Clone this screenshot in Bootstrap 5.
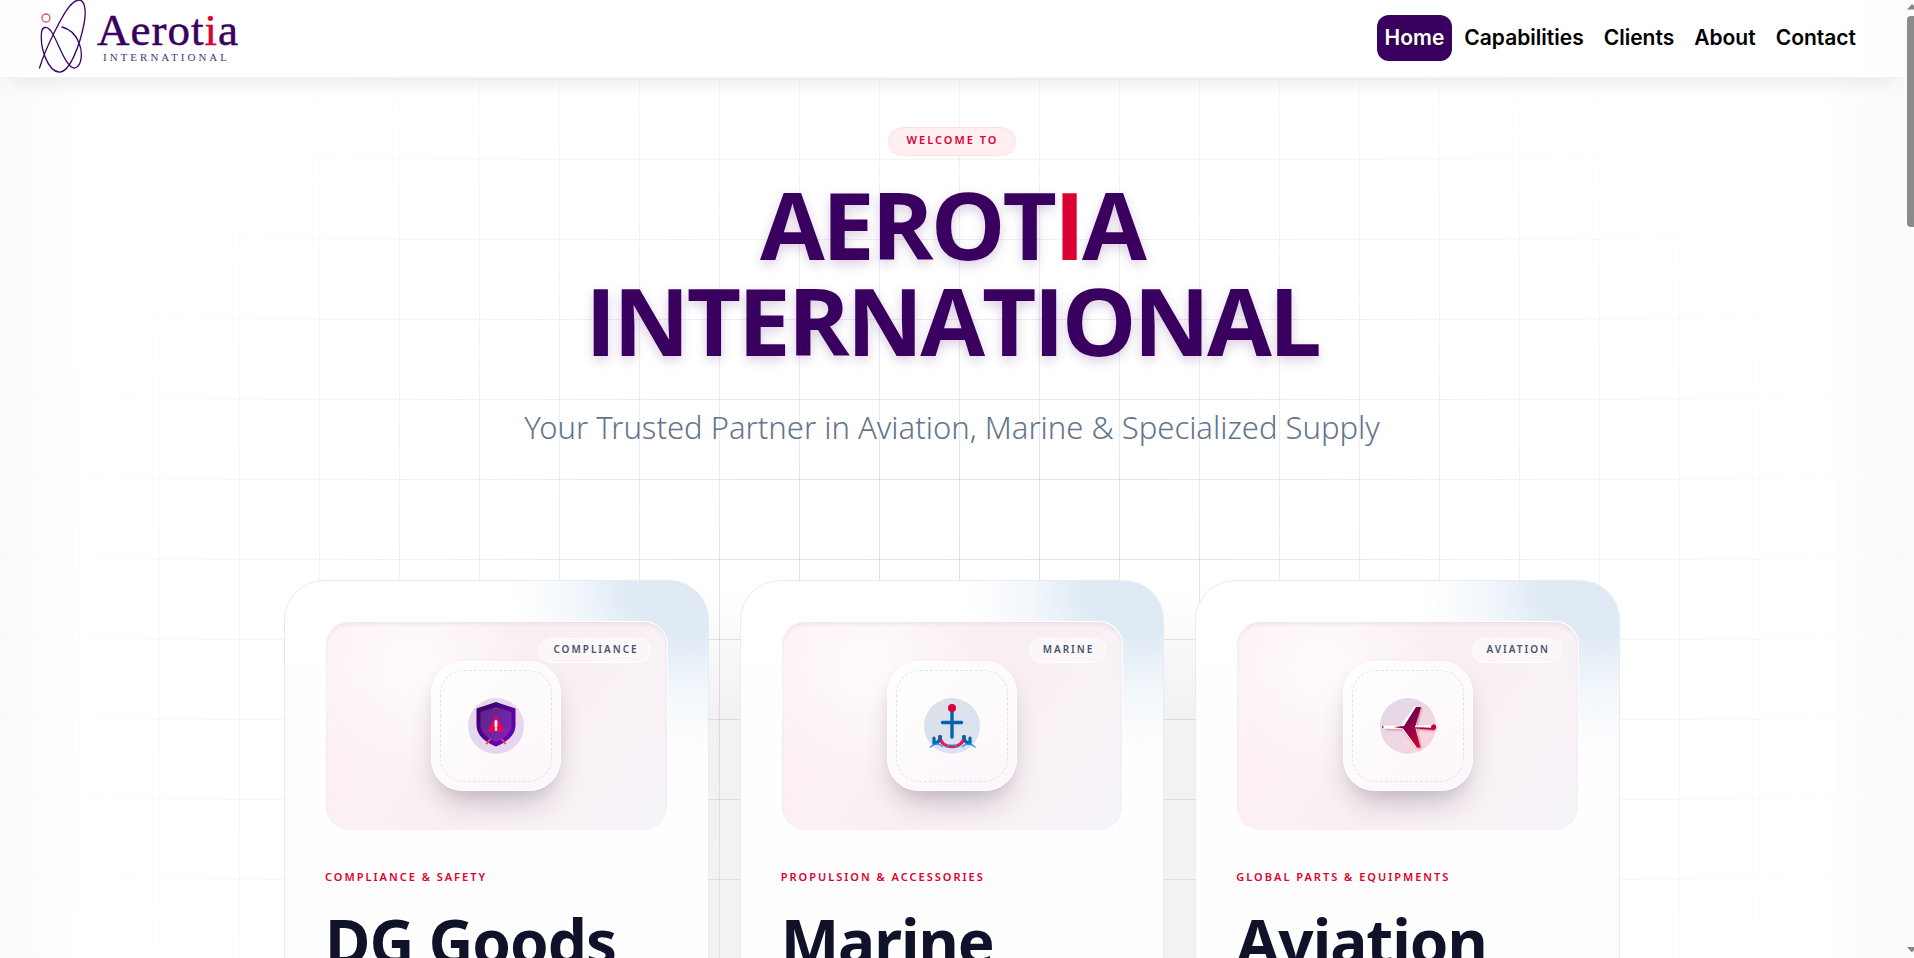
<!DOCTYPE html>
<html lang="en">
<head>
<meta charset="utf-8">
<meta name="viewport" content="width=device-width, initial-scale=1">
<title>Aerotia International</title>
<link href="https://cdn.jsdelivr.net/npm/bootstrap@5.3.0/dist/css/bootstrap.min.css" rel="stylesheet">
<style>
:root { --brand: #3a0060; --accent: #dc0032; --slate: #64748b; }
body { font-family: "Noto Sans", "Open Sans", sans-serif; background: #fff; }
.page-area { background: linear-gradient(90deg, #fafafd 0, #fdfdfe 50px, #fff 80px, #fff calc(100% - 80px), #fdfdfe calc(100% - 50px), #fafafd 100%); isolation: isolate; }
.grid-lines { position: absolute; inset: 0; z-index: -1;
  background-image: linear-gradient(90deg, transparent 79px, rgba(58,0,96,.13) 79px), linear-gradient(transparent 79px, rgba(58,0,96,.13) 79px);
  background-size: 80px 80px;
  -webkit-mask-image: radial-gradient(ellipse 980px 760px at 50% 640px, #000 10%, transparent 100%);
  mask-image: radial-gradient(ellipse 980px 760px at 50% 640px, #000 10%, transparent 100%); }
.top-nav { height: 78px; padding: 0 40px 2px; background: rgba(255,255,255,.7); box-shadow: 0 14px 22px -12px rgba(20,10,40,.11); border-bottom: 1px solid #f3f3f7; }
.top-nav .nav-link { font: 600 21px/30px Inter, sans-serif; padding: 8px; color: #000; border-radius: 12px; }
.top-nav .nav-link.active { background: var(--brand); color: #fff; text-shadow: 0 2px 3px rgba(0,0,0,.4); }
.brand-mark { width: 50px; height: 77px; }
.brand-text { font-family: "Liberation Serif", serif; color: var(--brand); margin-left: 7px; }
.brand-name { font-size: 45px; line-height: 39px; letter-spacing: 1px; -webkit-text-stroke: .5px currentColor; }
.brand-sub { font-size: 11px; line-height: 14px; letter-spacing: 3px; padding-left: 6px; color: #553080; }
.red { color: var(--accent); }
.hero { padding-top: 49px; }
.welcome { font-size: 11px; line-height: 15px; font-weight: 600; letter-spacing: 2px; color: var(--accent); background: #ffeff1; border: 1px solid #ffdde2; padding: 4px 17px 8px 18px; }
.hero-title { font-family: "Open Sans", sans-serif; font-size: 94px; line-height: 96px; font-weight: 700; letter-spacing: -3px; color: var(--brand); margin: 20px 0 0; text-shadow: 0 4px 12px rgba(58,0,96,.2); }
.hero-title .red { text-shadow: none; }
.hero-lead { font-size: 31px; line-height: 48px; font-weight: 300; color: var(--slate); margin: 35px 0 0; }
.service-grid { max-width: 1336px; margin: 129px auto 0; display: grid; grid-template-columns: repeat(3, 1fr); gap: 31px; background: linear-gradient(transparent 10px, rgba(20,10,40,.055) 130px); }
.service { border: 1px solid #e6ecf5; border-radius: 40px; padding: 40px; height: 560px; background: radial-gradient(ellipse 180px 180px at 94% 0, #dfeaf4 30%, rgba(238,244,251,.75) 60%, rgba(255,255,255,0) 95%), rgba(255,255,255,.9); }
.visual { height: 210px; border-radius: 24px; border: 1px solid rgba(255,255,255,.9); background: radial-gradient(circle at 25% 22%, rgba(255,255,255,.75), rgba(255,255,255,0) 38%), linear-gradient(125deg, #fef1f3, #f9eff3 55%, #f6f4f9); box-shadow: inset 0 3px 6px -3px rgba(90,20,50,.14); }
.chip { position: absolute; top: 16px; right: 16px; font-size: 10px; line-height: 15px; font-weight: 600; letter-spacing: 2px; color: #475569; padding: 3px 11px 5px 13px; border-radius: 13px; background: rgba(255,255,255,.45); border: 1px solid rgba(255,255,255,.6); }
.tile { width: 130px; height: 130px; border-radius: 32px; padding: 8px; background: linear-gradient(145deg, rgba(255,255,255,.9), rgba(253,249,252,.75)); border: 1px solid #fff; box-shadow: 0 18px 30px -10px rgba(40,20,50,.28), 0 4px 12px rgba(50,20,60,.04); }
.tile-inner { border: 1px dashed #dbe5f0; border-radius: 24px; }
.tile svg { width: 56px; height: 56px; overflow: visible; }
.kicker { font-size: 11px; line-height: 16px; font-weight: 600; letter-spacing: 2px; color: var(--accent); margin: 38px 0 0; }
.service-title { font-size: 62px; line-height: 70px; font-weight: 700; letter-spacing: -1px; color: #10122a; margin: 21px 0 0; }
.scroll-rail { width: 10px; background: #fcfcfc; }
.scroll-thumb { width: 7px; height: 211px; background: #8b8b8b; border-radius: 4px 0 0 4px; }
</style>
</head>
<body class="d-flex vh-100 overflow-hidden">
<div class="page-area position-relative flex-grow-1 overflow-hidden">
  <div class="grid-lines"></div>
  <nav class="top-nav d-flex align-items-center justify-content-between">
    <a href="#" class="d-flex align-items-center text-decoration-none" aria-label="Aerotia International">
      <svg class="brand-mark" viewBox="40 0 50 77" fill="none" stroke="#3a0060" stroke-width="1.3" stroke-linecap="round" overflow="visible">
        <path d="M39.500 69C44 54 50 42 54 34C60 22 70 1 79 1C86 1 86 15 84 25C80 45 70 74 59 73C48 72 40 50 41.500 34C42 27 47 27 51 32C58 42 66 70 75 69C82 67 83 53 79 44C76 36 70 30 62 28"/>
        <circle cx="46" cy="19" r="4" stroke="#e0506c"/>
      </svg>
      <span class="brand-text d-flex flex-column"><span class="brand-name">Aerot<span class="red">i</span>a</span><span class="brand-sub">INTERNATIONAL</span></span>
    </a>
    <div class="nav flex-nowrap gap-1">
      <a class="nav-link active" href="#">Home</a>
      <a class="nav-link" href="#">Capabilities</a>
      <a class="nav-link" href="#">Clients</a>
      <a class="nav-link" href="#">About</a>
      <a class="nav-link" href="#">Contact</a>
    </div>
  </nav>
  <main class="hero">
    <header class="d-flex flex-column align-items-center text-center">
      <span class="welcome rounded-pill">WELCOME TO</span>
      <h1 class="hero-title">AEROT<span class="red">I</span>A<br>INTERNATIONAL</h1>
      <p class="hero-lead">Your Trusted Partner in Aviation, Marine &amp; Specialized Supply</p>
    </header>
    <section class="service-grid">
      <article class="service">
        <div class="visual position-relative d-flex align-items-center justify-content-center">
          <span class="chip">COMPLIANCE</span>
          <div class="tile d-flex"><div class="tile-inner flex-grow-1 d-flex align-items-center justify-content-center">
            <svg viewBox="0 0 56 56">
              <defs>
                <linearGradient id="sh" x1="0" y1="0" x2="1" y2="1"><stop stop-color="#3a0060"/><stop offset="1" stop-color="#7200c4"/></linearGradient>
              </defs>
              <circle cx="28" cy="28" r="28" fill="url(#sh)" opacity=".14"/>
              <path d="M28 4L47.500 10.500V27C47.500 37 39 44.500 28 48.500C17 44.500 8.500 37 8.500 27V10.500Z" fill="url(#sh)"/>
              <path d="M28 9L43.500 14V27C43.500 34 37 40 28 44C19 40 12.500 34 12.500 27V14Z" fill="#fff" opacity=".14"/>
              <path d="M28 17.500L37 33.500H19Z" fill="#f0004c"/>
              <path d="M28 23.500V28.500M28 31.500V31.600" stroke="#fff" stroke-width="2.800" stroke-linecap="round"/>
              <path d="M22 41.500L18.800 45.500M34 41.500L37.200 45.500" stroke="#ff4066" stroke-width="2" stroke-linecap="round"/>
            </svg>
          </div></div>
        </div>
        <p class="kicker">COMPLIANCE &amp; SAFETY</p>
        <h2 class="service-title">DG Goods</h2>
      </article>
      <article class="service">
        <div class="visual position-relative d-flex align-items-center justify-content-center">
          <span class="chip">MARINE</span>
          <div class="tile d-flex"><div class="tile-inner flex-grow-1 d-flex align-items-center justify-content-center">
            <svg viewBox="0 0 56 56" fill="none" stroke-linecap="round" stroke-linejoin="round">
              <defs><linearGradient id="an" x1="0" y1="0" x2="1" y2="1"><stop stop-color="#1c3972"/><stop offset="1" stop-color="#0878c8"/></linearGradient></defs>
              <circle cx="28" cy="28" r="28" fill="url(#an)" opacity=".15"/>
              <path d="M28 13V39M18.500 24.500H37.500" stroke="#0562ad" stroke-width="3.400"/>
              <circle cx="28" cy="10" r="4" fill="#dc0032"/>
              <path d="M15.500 38.500C17 45.500 22 48.600 28 48.600S39 45.500 40.500 38.500" stroke="#ee1750" stroke-width="3.200"/>
              <path d="M10 40V45M10 45.500C13.500 45 16 42 16.500 38.500M46 40V45M46 45.500C42.500 45 40 42 39.500 38.500" stroke="#0562ad" stroke-width="3.200"/>
              <path d="M6.500 49Q12.500 43 18.500 48.500M22 48.500Q28 46 34 48.500M38.500 48.500Q44.500 43 51 49" stroke="#1590df" stroke-width="1.600" opacity=".85"/>
            </svg>
          </div></div>
        </div>
        <p class="kicker">PROPULSION &amp; ACCESSORIES</p>
        <h2 class="service-title">Marine</h2>
      </article>
      <article class="service">
        <div class="visual position-relative d-flex align-items-center justify-content-center">
          <span class="chip">AVIATION</span>
          <div class="tile d-flex"><div class="tile-inner flex-grow-1 d-flex align-items-center justify-content-center">
            <svg viewBox="0 0 56 56">
              <defs>
                <linearGradient id="pl" gradientUnits="userSpaceOnUse" x1="14" y1="8" x2="46" y2="48"><stop stop-color="#3a0060"/><stop offset="1" stop-color="#dc0032"/></linearGradient>
                <filter id="glow" x="-20%" y="-20%" width="140%" height="140%"><feDropShadow dx="1" dy="1" stdDeviation="1.200" flood-color="#dc0032" flood-opacity=".45"/></filter>
              </defs>
              <circle cx="28" cy="28" r="28" fill="url(#pl)" opacity=".14"/>
              <g filter="url(#glow)">
                <path d="M4 27.500H21L34 8.500H40L36 28L53 26.500V31L36 30.500L40 49H36L22 31L4 30.500Z" fill="#fff"/>
                <path d="M14 29L24 28L36 9H41L35.500 28L52 30L54 26L56 28.500L54 32L35.500 30.500L40.500 49.500H37L23 30.500Z" fill="url(#pl)"/>
                <path d="M35 28L51 26.700L48 29.500L35 29.300Z" fill="#fff"/>
              </g>
              <circle cx="2.800" cy="29" r=".8" fill="#3a0060"/>
              <circle cx="53.500" cy="29" r="2.500" fill="#cc0038"/>
            </svg>
          </div></div>
        </div>
        <p class="kicker">GLOBAL PARTS &amp; EQUIPMENTS</p>
        <h2 class="service-title">Aviation</h2>
      </article>
    </section>
  </main>
</div>
<div class="scroll-rail d-flex flex-column align-items-end justify-content-between flex-shrink-0" aria-hidden="true">
  <div class="d-flex flex-column align-items-end">
    <svg width="7" height="16"><path d="M0 9.500L5 4L7 6V9.500Z" fill="#858585"/></svg>
    <div class="scroll-thumb"></div>
  </div>
  <svg width="7" height="16"><path d="M0 5H7V8L5 10.500Z" fill="#858585"/></svg>
</div>
<script src="https://cdn.jsdelivr.net/npm/bootstrap@5.3.0/dist/js/bootstrap.bundle.min.js"></script>
</body>
</html>
